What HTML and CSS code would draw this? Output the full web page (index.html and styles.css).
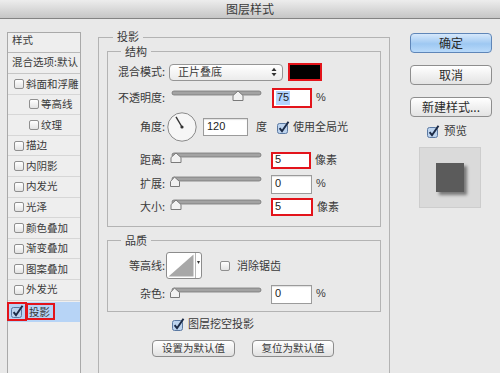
FILE: index.html
```html
<!DOCTYPE html>
<html lang="zh-CN">
<head>
<meta charset="utf-8">
<title>图层样式</title>
<link rel="stylesheet" href="styles.css">
</head>
<body>
<div class="titlebar">图层样式</div>
<div class="dialog">
  <div class="styles-list">
    <div class="list-head">样式</div>
    <div class="list-blend">混合选项:默认</div>
    <div class="item"><span class="cb"></span><span>斜面和浮雕</span></div>
    <div class="item sub"><span class="cb"></span><span>等高线</span></div>
    <div class="item sub"><span class="cb"></span><span>纹理</span></div>
    <div class="item"><span class="cb"></span><span>描边</span></div>
    <div class="item"><span class="cb"></span><span>内阴影</span></div>
    <div class="item"><span class="cb"></span><span>内发光</span></div>
    <div class="item"><span class="cb"></span><span>光泽</span></div>
    <div class="item"><span class="cb"></span><span>颜色叠加</span></div>
    <div class="item"><span class="cb"></span><span>渐变叠加</span></div>
    <div class="item"><span class="cb"></span><span>图案叠加</span></div>
    <div class="item"><span class="cb"></span><span>外发光</span></div>
    <div class="item active">
      <span class="hl hl-cb"><svg class="ck" width="13" height="13" viewBox="0 0 13 13"><rect x="0.5" y="2.5" width="10" height="10" rx="2" fill="#bcd3ee" stroke="#5b79a2"/><path d="M2.6 7.2 L5 10.2 L11.5 0.8" fill="none" stroke="#1c2b47" stroke-width="2"/></svg></span>
      <span class="hl hl-text">投影</span>
    </div>
  </div>

  <div class="main">
    <div class="group outer">
      <span class="legend">投影</span>

      <div class="group struct">
        <span class="legend">结构</span>

        <div class="row">
          <span class="lbl">混合模式:</span>
          <div class="select"><span>正片叠底</span><svg width="6" height="10" viewBox="0 0 6 10"><path d="M0.5 4 L3 0.8 L5.5 4 Z M0.5 6 L3 9.2 L5.5 6 Z" fill="#333"/></svg></div>
          <div class="swatch"></div>
        </div>

        <div class="row r-opacity">
          <span class="lbl">不透明度:</span>
          <svg class="slider" width="94" height="20" viewBox="0 0 94 20"><rect x="2" y="3" width="89" height="4" rx="2" fill="#a3a3a3" stroke="#767676" stroke-width="0.8"/><path d="M63 12.5 V7.5 L68 3 L73 7.5 V12.5 Z" fill="#f2f2f2" stroke="#7a7a7a" stroke-linejoin="round"/></svg>
          <div class="num red w-op"><span class="sel">75</span></div>
          <span class="unit">%</span>
        </div>

        <div class="row r-angle">
          <span class="lbl">角度:</span>
          <svg class="dial" width="30" height="30" viewBox="0 0 30 30"><circle cx="15" cy="15" r="14.2" fill="#f6f6f6" stroke="#8a8a8a"/><line x1="15" y1="15" x2="9" y2="4.8" stroke="#333" stroke-width="1.4"/><circle cx="15" cy="15" r="1.6" fill="#333"/></svg>
          <div class="num angle">120</div>
          <span class="deg">度</span>
          <svg class="ck ck-global" width="13" height="13" viewBox="0 0 13 13"><rect x="0.5" y="2.5" width="10" height="10" rx="2" fill="#bcd3ee" stroke="#5b79a2"/><path d="M2.6 7.2 L5 10.2 L11.5 0.8" fill="none" stroke="#1c2b47" stroke-width="2"/></svg>
          <span class="cktext">使用全局光</span>
        </div>

        <div class="row r-dist">
          <span class="lbl">距离:</span>
          <svg class="slider" width="94" height="20" viewBox="0 0 94 20"><rect x="2" y="3" width="89" height="4" rx="2" fill="#a3a3a3" stroke="#767676" stroke-width="0.8"/><path d="M1 12.5 V7.5 L6 3 L11 7.5 V12.5 Z" fill="#f2f2f2" stroke="#7a7a7a" stroke-linejoin="round"/></svg>
          <div class="num red w-d">5</div>
          <span class="unit cjk">像素</span>
        </div>

        <div class="row r-spread">
          <span class="lbl">扩展:</span>
          <svg class="slider" width="94" height="20" viewBox="0 0 94 20"><rect x="2" y="3" width="89" height="4" rx="2" fill="#a3a3a3" stroke="#767676" stroke-width="0.8"/><path d="M0.5 12.5 V7.5 L4.5 3 L9.5 7.5 V12.5 Z" fill="#f2f2f2" stroke="#7a7a7a" stroke-linejoin="round"/></svg>
          <div class="num w-s">0</div>
          <span class="unit">%</span>
        </div>

        <div class="row r-size">
          <span class="lbl">大小:</span>
          <svg class="slider" width="94" height="20" viewBox="0 0 94 20"><rect x="2" y="3" width="89" height="4" rx="2" fill="#a3a3a3" stroke="#767676" stroke-width="0.8"/><path d="M1 12.5 V7.5 L6 3 L11 7.5 V12.5 Z" fill="#f2f2f2" stroke="#7a7a7a" stroke-linejoin="round"/></svg>
          <div class="num red w-z">5</div>
          <span class="unit cjk">像素</span>
        </div>
      </div>

      <div class="group quality">
        <span class="legend">品质</span>
        <div class="row r-contour">
          <span class="lbl">等高线:</span>
          <svg class="contour" width="36" height="27" viewBox="0 0 36 27"><rect x="0.5" y="0.5" width="35" height="26" rx="2.5" fill="#fff" stroke="#8c8c8c"/><path d="M2.5 24.5 L27.5 2.5 L27.5 24.5 Z" fill="#a8a8a8"/><line x1="29.5" y1="1" x2="29.5" y2="26" stroke="#b5b5b5"/><path d="M31 9 L34 9 L32.5 12 Z" fill="#333"/></svg>
          <span class="cb cb-aa"></span>
          <span class="cktext aa">消除锯齿</span>
        </div>
        <div class="row r-noise">
          <span class="lbl">杂色:</span>
          <svg class="slider" width="94" height="20" viewBox="0 0 94 20"><rect x="2" y="4" width="89" height="4" rx="2" fill="#a3a3a3" stroke="#767676" stroke-width="0.8"/><path d="M0.5 13.5 V8.5 L4.5 4 L9.5 8.5 V13.5 Z" fill="#f2f2f2" stroke="#7a7a7a" stroke-linejoin="round"/></svg>
          <div class="num w-n">0</div>
          <span class="unit">%</span>
        </div>
      </div>

      <div class="check-row">
        <svg class="ck" width="13" height="13" viewBox="0 0 13 13"><rect x="0.5" y="2.5" width="10" height="10" rx="2" fill="#bcd3ee" stroke="#5b79a2"/><path d="M2.6 7.2 L5 10.2 L11.5 0.8" fill="none" stroke="#1c2b47" stroke-width="2"/></svg>
        <span class="cktext">图层挖空投影</span>
      </div>

      <div class="btn-row">
        <div class="btn b1">设置为默认值</div>
        <div class="btn b2">复位为默认值</div>
      </div>
    </div>
  </div>

  <div class="side">
    <div class="sbtn ok">确定</div>
    <div class="sbtn">取消</div>
    <div class="sbtn">新建样式...</div>
    <div class="preview-row">
      <svg class="ck" width="13" height="13" viewBox="0 0 13 13"><rect x="0.5" y="2.5" width="10" height="10" rx="2" fill="#bcd3ee" stroke="#5b79a2"/><path d="M2.6 7.2 L5 10.2 L11.5 0.8" fill="none" stroke="#1c2b47" stroke-width="2"/></svg>
      <span class="cktext pv">预览</span>
    </div>
    <div class="preview-box"><div class="preview-sq"></div></div>
  </div>
</div>
</body>
</html>
```

FILE: styles.css
```css
* { box-sizing: border-box; }
html, body { margin: 0; padding: 0; }
body {
  width: 500px;
  height: 373px;
  overflow: hidden;
  background: #e9e9e9;
  font-family: "Noto Sans CJK SC", sans-serif;
  font-size: 11px;
  line-height: 1.2;
  color: #3a3a3a;
}
.titlebar {
  height: 19px;
  background: linear-gradient(#ededed, #c6c6c6);
  border-bottom: 1px solid #848484;
  text-align: center;
  font-size: 12px;
  line-height: 18px;
  color: #3a3a3a;
}
.dialog {
  display: flex;
  align-items: flex-start;
  height: 354px;
  overflow: hidden;
  padding: 13px 0 0 7px;
}

/* left style list */
.styles-list {
  width: 74px;
  height: 345px;
  flex-shrink: 0;
  border: 1px solid #a9a9a9;
  background: #eeeeee;
  font-size: 10.5px;
}
.list-head {
  height: 20px;
  padding: 1px 0 0 4px;
  border-bottom: 1px solid #b8b8b8;
}
.list-blend {
  height: 21px;
  padding: 3px 0 0 4px;
  border-bottom: 1px solid #c6c6c6;
  white-space: nowrap;
}
.item {
  display: flex;
  align-items: center;
  gap: 2px;
  height: 20.6px;
  padding-left: 6px;
  border-bottom: 1px solid #d6d6d6;
  white-space: nowrap;
}
.item.sub { padding-left: 21px; }
.cb {
  display: inline-block;
  width: 10px;
  height: 10px;
  flex-shrink: 0;
  border: 1px solid #8f8f8f;
  border-radius: 2px;
  background: linear-gradient(#ffffff, #e3e3e3);
}
.item.active {
  background: #b7d4f6;
  padding-left: 0;
  gap: 0;
  border-bottom: none;
  margin-top: 1px;
}
.hl { border: 2px solid #e3141b; display: flex; align-items: center; }
.hl-cb {
  width: 20px;
  height: 19px;
  margin-left: -1px;
  justify-content: center;
}
.hl-text {
  width: 29px;
  height: 17px;
  margin-left: -1px;
  padding-left: 1px;
}
.ck { display: block; flex-shrink: 0; }

/* main groups */
.main {
  width: 292px;
  flex-shrink: 0;
  margin-left: 17px;
  margin-top: 5px;
}
.group {
  position: relative;
  border: 1px solid #b3b3b3;
}
.legend {
  position: absolute;
  top: -9px;
  left: 14px;
  padding: 0 4px;
  background: #e9e9e9;
  line-height: 14px;
  font-size: 11px;
}
.outer {
  height: 345px;
  padding: 13px 8px 0 8px;
}
.struct { padding: 10px 0 9px 0; }
.struct .legend, .quality .legend { top: -8px; left: 13px; }
.quality { margin-top: 13px; padding: 11px 0 7px 0; }

.row {
  display: flex;
  align-items: center;
  height: 20px;
  white-space: nowrap;
}
.lbl {
  width: 57px;
  flex-shrink: 0;
  text-align: right;
}
.r-opacity { margin-top: 6px; }
.r-angle { margin-top: 4px; height: 30px; }
.r-dist { margin-top: 8px; }
.r-spread { margin-top: 4px; }
.r-size { margin-top: 3px; }
.r-contour { height: 27px; }
.r-noise { margin-top: 5px; }

.select {
  margin-left: 4px;
  width: 114px;
  height: 17px;
  flex-shrink: 0;
  display: flex;
  align-items: center;
  justify-content: space-between;
  padding: 0 5px 0 8px;
  border: 1px solid #959595;
  border-radius: 4px;
  background: linear-gradient(#ffffff, #ebebeb);
}
.swatch {
  margin-left: 5px;
  width: 34px;
  height: 18px;
  flex-shrink: 0;
  border: 2px solid #e3141b;
  background: #000;
}
.slider { display: block; flex-shrink: 0; margin-left: 5px; align-self: flex-start; }
.num {
  display: flex;
  align-items: center;
  flex-shrink: 0;
  width: 40px;
  height: 19px;
  margin-left: 7px;
  padding-left: 3px;
  border: 1px solid #9b9b9b;
  background: #fff;
  box-shadow: inset 0 1px 1px rgba(0, 0, 0, 0.12);
  font-family: "Liberation Sans", sans-serif;
  font-size: 11px;
  color: #222;
}
.num.red {
  border: 2px solid #e3141b;
  box-shadow: none;
  padding-left: 2px;
}
.w-op { margin-left: 8px; height: 20px; }
.w-d { height: 17px; }
.w-s { height: 19px; width: 41px; }
.w-z { height: 18px; width: 42px; }
.w-n { height: 19px; width: 41px; }
.sel { background: #b3d4fd; padding: 0 1px; }
.unit {
  margin-left: 4px;
  font-family: "Liberation Sans", sans-serif;
  font-size: 11px;
}
.unit.cjk { font-family: "Noto Sans CJK SC", sans-serif; }
.dial { display: block; flex-shrink: 0; margin-left: 2px; }
.num.angle { width: 45px; height: 18px; margin-left: 6px; }
.deg { margin-left: 8px; }
.ck-global { margin-left: 10px; }
.cktext { margin-left: 3px; }
.contour { display: block; flex-shrink: 0; margin-left: 1px; }
.cb-aa { margin-left: 18px; }
.cktext.aa { margin-left: 7px; }

.check-row {
  display: flex;
  align-items: center;
  height: 16px;
  margin: 4px 0 0 65px;
  white-space: nowrap;
}
.btn-row {
  display: flex;
  gap: 17px;
  margin: 8px 0 0 45px;
}
.btn {
  height: 17px;
  display: flex;
  align-items: center;
  justify-content: center;
  border: 1px solid #8c8c8c;
  border-radius: 4px;
  background: linear-gradient(#ffffff, #e1e1e1);
  font-size: 10.5px;
  white-space: nowrap;
}
.b1 { width: 83px; }
.b2 { width: 82px; }

/* right column */
.side {
  width: 82px;
  flex-shrink: 0;
  margin-left: 20px;
  margin-top: 1px;
}
.sbtn {
  height: 20px;
  margin-bottom: 12px;
  display: flex;
  align-items: center;
  justify-content: center;
  border: 1px solid #8e8e8e;
  border-radius: 4px;
  background: linear-gradient(#ffffff, #e3e3e3);
  font-size: 12px;
  color: #2a2a2a;
  white-space: nowrap;
}
.sbtn.ok {
  border-color: #5f86b8;
  background: linear-gradient(#d6e8fb, #9ec8f2 55%, #b9dafa);
}
.preview-row {
  display: flex;
  align-items: center;
  height: 14px;
  margin: -5px 0 0 17px;
}
.cktext.pv { margin-left: 4px; font-size: 11.5px; }
.preview-box {
  width: 62px;
  height: 61px;
  margin: 9px 0 0 9px;
  display: flex;
  align-items: center;
  justify-content: center;
  background: #dadada;
  border: 1px solid #cdcdcd;
}
.preview-sq {
  width: 28px;
  height: 29px;
  background: #5b5b5b;
  box-shadow: 3px 3px 3px rgba(0, 0, 0, 0.45);
}
```
